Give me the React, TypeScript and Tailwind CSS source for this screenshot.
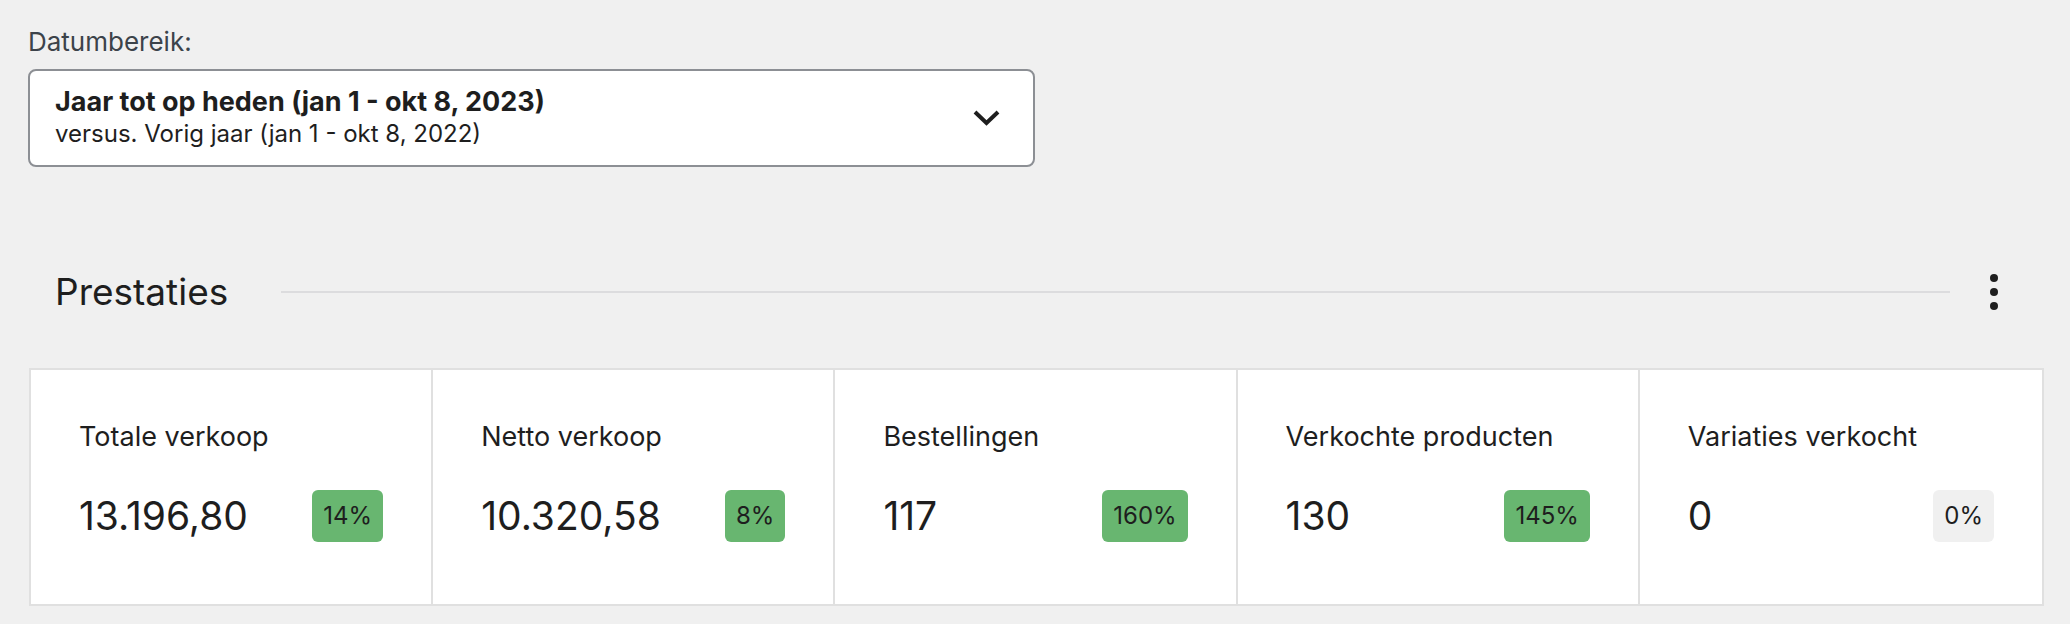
import React from "react";

const cards = [
  { label: "Totale verkoop", value: "13.196,80", delta: "14%", good: true },
  { label: "Netto verkoop", value: "10.320,58", delta: "8%", good: true },
  { label: "Bestellingen", value: "117", delta: "160%", good: true },
  { label: "Verkochte producten", value: "130", delta: "145%", good: true },
  { label: "Variaties verkocht", value: "0", delta: "0%", good: false },
];

export default function App() {
  return (
    <div
      className="min-h-[624px] w-[2070px] bg-[#f0f0f0] text-[#1e1e1e]"
      style={{ fontFamily: "Inter, 'Noto Sans', sans-serif" }}
    >
      <div className="ml-[28px] w-[2016px] pt-[26px]">
        <div className="text-[26px] leading-[32px] text-[#3c434a]">Datumbereik:</div>
        <div className="mt-[11px] flex h-[98px] w-[1007px] items-center justify-between rounded-[8px] border-2 border-[#8c8f94] bg-white pl-[25px] pr-[33px]">
          <div className="flex flex-col">
            <span className="text-[27px] font-bold leading-[32px] text-[#1e1e1e]">
              Jaar tot op heden (jan 1 - okt 8, 2023)
            </span>
            <span className="text-[24px] leading-[32px] text-[#1e1e1e]">
              versus. Vorig jaar (jan 1 - okt 8, 2022)
            </span>
          </div>
          <svg width="27" height="16" viewBox="0 0 27 16" fill="none">
            <path d="M2 2 L13.5 13 L25 2" stroke="#1e1e1e" strokeWidth="4" />
          </svg>
        </div>

        <div className="mt-[93px] flex h-[64px] items-center">
          <div className="pl-[27px] text-[37px] leading-[48px] text-[#1e1e1e]">Prestaties</div>
          <div className="ml-[53px] h-[2px] flex-1 bg-[#dcdcde]" />
          <div className="flex w-[94px] pl-[40px]">
            <div className="flex flex-col gap-[6px]">
              <span className="block h-[8px] w-[8px] rounded-full bg-[#1e1e1e]" />
              <span className="block h-[8px] w-[8px] rounded-full bg-[#1e1e1e]" />
              <span className="block h-[8px] w-[8px] rounded-full bg-[#1e1e1e]" />
            </div>
          </div>
        </div>

        <div className="mt-[44px] ml-[1px] grid w-[2015px] grid-cols-5 border-2 border-[#e0e0e0] bg-white">
          {cards.map((c, i) => (
            <div
              key={c.label}
              className={
                "flex h-[234px] flex-col px-[48px] pt-[49px] " +
                (i < 4 ? "border-r-2 border-[#e0e0e0]" : "")
              }
            >
              <div className="text-[27px] leading-[36px] text-[#1e1e1e]">{c.label}</div>
              <div className="mt-[35px] flex items-center justify-between">
                <span className="text-[39px] leading-[52px] text-[#1e1e1e]">{c.value}</span>
                <span
                  className={
                    "flex h-[52px] items-center rounded-[6px] px-[11px] text-[24px] text-[#1e1e1e] " +
                    (c.good ? "bg-[#68b670]" : "bg-[#f0f0f0]")
                  }
                >
                  {c.delta}
                </span>
              </div>
            </div>
          ))}
        </div>
      </div>
    </div>
  );
}
